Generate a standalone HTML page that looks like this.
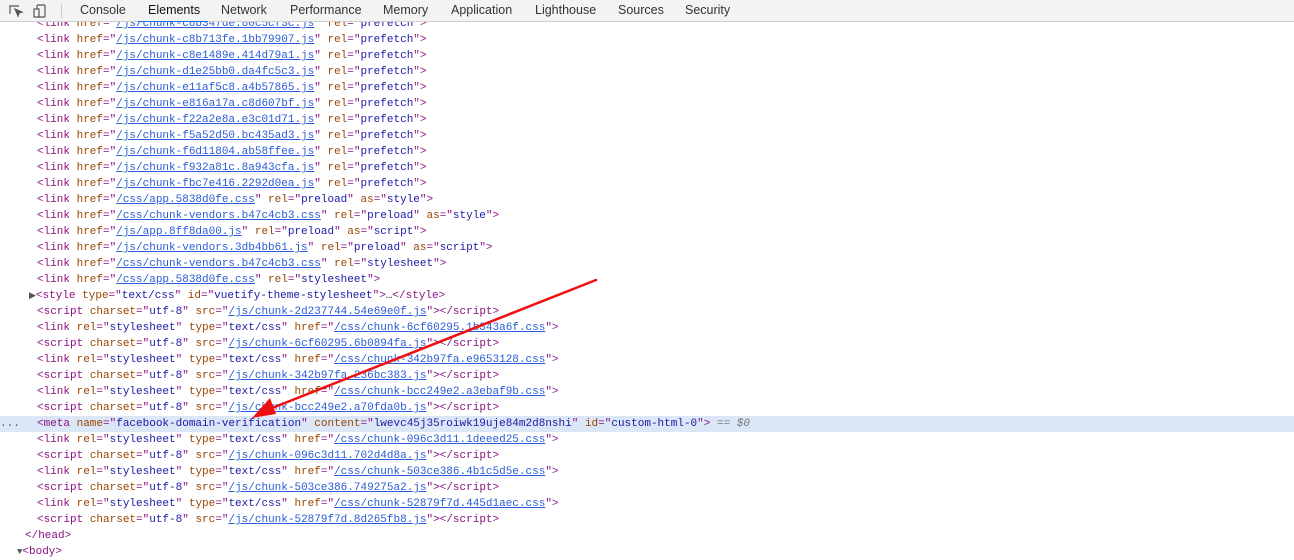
<!DOCTYPE html>
<html><head><meta charset="utf-8"><style>
body{margin:0;width:1294px;height:559px;overflow:hidden;background:#fff;position:relative;font-family:"Liberation Mono",monospace;font-size:11px}
.l{position:absolute;left:0;right:0;height:16px;line-height:16px;white-space:pre;color:#881280}
.t{color:#881280}.a{color:#994500}.v{color:#1a1aa6}.u{color:#1a1aa6;text-decoration:underline;color:#2a5bd7}
.hl{background:#dbe7f7}
#tb{position:absolute;left:0;top:0;width:1294px;height:21px;background:#f3f3f3;border-bottom:1px solid #cfcfcf;font-family:"Liberation Sans",sans-serif;font-size:12.5px;color:#333;z-index:2}
#tb span{position:absolute;top:3px}
</style></head><body>
<div id="tb">
<svg style="position:absolute;left:8px;top:3px" width="40" height="16" viewBox="0 0 40 16" fill="none" stroke="#555" stroke-width="1.2"><path d="M2 11V3h9"/><path d="M7 6l7 3-3 1-1 3z" fill="#555"/><rect x="29" y="2" width="8" height="12" rx="1"/><rect x="26" y="6" width="5" height="8" fill="#f3f3f3"/></svg>
<div style="position:absolute;left:61px;top:4px;width:1px;height:14px;background:#ccc"></div>
<span style="left:80px">Console</span><span style="left:148px;color:#111">Elements</span><span style="left:221px">Network</span><span style="left:290px">Performance</span><span style="left:383px">Memory</span><span style="left:451px">Application</span><span style="left:535px">Lighthouse</span><span style="left:618px">Sources</span><span style="left:685px">Security</span>
<div style="position:absolute;left:138px;top:21px;width:70px;height:1px;background:#1a73e8"></div>
</div>
<div class="l" style="top:16px;left:37px">&lt;link <span class="a">href</span>="<span class="u">/js/chunk-c8b347de.80c5cf3c.js</span>" <span class="a">rel</span>="<span class="v">prefetch</span>"&gt;</div>
<div class="l" style="top:32px;left:37px">&lt;link <span class="a">href</span>="<span class="u">/js/chunk-c8b713fe.1bb79907.js</span>" <span class="a">rel</span>="<span class="v">prefetch</span>"&gt;</div>
<div class="l" style="top:48px;left:37px">&lt;link <span class="a">href</span>="<span class="u">/js/chunk-c8e1489e.414d79a1.js</span>" <span class="a">rel</span>="<span class="v">prefetch</span>"&gt;</div>
<div class="l" style="top:64px;left:37px">&lt;link <span class="a">href</span>="<span class="u">/js/chunk-d1e25bb0.da4fc5c3.js</span>" <span class="a">rel</span>="<span class="v">prefetch</span>"&gt;</div>
<div class="l" style="top:80px;left:37px">&lt;link <span class="a">href</span>="<span class="u">/js/chunk-e11af5c8.a4b57865.js</span>" <span class="a">rel</span>="<span class="v">prefetch</span>"&gt;</div>
<div class="l" style="top:96px;left:37px">&lt;link <span class="a">href</span>="<span class="u">/js/chunk-e816a17a.c8d607bf.js</span>" <span class="a">rel</span>="<span class="v">prefetch</span>"&gt;</div>
<div class="l" style="top:112px;left:37px">&lt;link <span class="a">href</span>="<span class="u">/js/chunk-f22a2e8a.e3c01d71.js</span>" <span class="a">rel</span>="<span class="v">prefetch</span>"&gt;</div>
<div class="l" style="top:128px;left:37px">&lt;link <span class="a">href</span>="<span class="u">/js/chunk-f5a52d50.bc435ad3.js</span>" <span class="a">rel</span>="<span class="v">prefetch</span>"&gt;</div>
<div class="l" style="top:144px;left:37px">&lt;link <span class="a">href</span>="<span class="u">/js/chunk-f6d11804.ab58ffee.js</span>" <span class="a">rel</span>="<span class="v">prefetch</span>"&gt;</div>
<div class="l" style="top:160px;left:37px">&lt;link <span class="a">href</span>="<span class="u">/js/chunk-f932a81c.8a943cfa.js</span>" <span class="a">rel</span>="<span class="v">prefetch</span>"&gt;</div>
<div class="l" style="top:176px;left:37px">&lt;link <span class="a">href</span>="<span class="u">/js/chunk-fbc7e416.2292d0ea.js</span>" <span class="a">rel</span>="<span class="v">prefetch</span>"&gt;</div>
<div class="l" style="top:192px;left:37px">&lt;link <span class="a">href</span>="<span class="u">/css/app.5838d0fe.css</span>" <span class="a">rel</span>="<span class="v">preload</span>" <span class="a">as</span>="<span class="v">style</span>"&gt;</div>
<div class="l" style="top:208px;left:37px">&lt;link <span class="a">href</span>="<span class="u">/css/chunk-vendors.b47c4cb3.css</span>" <span class="a">rel</span>="<span class="v">preload</span>" <span class="a">as</span>="<span class="v">style</span>"&gt;</div>
<div class="l" style="top:224px;left:37px">&lt;link <span class="a">href</span>="<span class="u">/js/app.8ff8da00.js</span>" <span class="a">rel</span>="<span class="v">preload</span>" <span class="a">as</span>="<span class="v">script</span>"&gt;</div>
<div class="l" style="top:240px;left:37px">&lt;link <span class="a">href</span>="<span class="u">/js/chunk-vendors.3db4bb61.js</span>" <span class="a">rel</span>="<span class="v">preload</span>" <span class="a">as</span>="<span class="v">script</span>"&gt;</div>
<div class="l" style="top:256px;left:37px">&lt;link <span class="a">href</span>="<span class="u">/css/chunk-vendors.b47c4cb3.css</span>" <span class="a">rel</span>="<span class="v">stylesheet</span>"&gt;</div>
<div class="l" style="top:272px;left:37px">&lt;link <span class="a">href</span>="<span class="u">/css/app.5838d0fe.css</span>" <span class="a">rel</span>="<span class="v">stylesheet</span>"&gt;</div>
<div class="l" style="top:288px;left:29px"><span style="color:#555;font-size:9px">▶</span>&lt;style <span class="a">type</span>="<span class="v">text/css</span>" <span class="a">id</span>="<span class="v">vuetify-theme-stylesheet</span>"&gt;<span style="color:#333">…</span>&lt;/style&gt;</div>
<div class="l" style="top:304px;left:37px">&lt;script <span class="a">charset</span>="<span class="v">utf-8</span>" <span class="a">src</span>="<span class="u">/js/chunk-2d237744.54e69e0f.js</span>"&gt;&lt;/script&gt;</div>
<div class="l" style="top:320px;left:37px">&lt;link <span class="a">rel</span>="<span class="v">stylesheet</span>" <span class="a">type</span>="<span class="v">text/css</span>" <span class="a">href</span>="<span class="u">/css/chunk-6cf60295.1b343a6f.css</span>"&gt;</div>
<div class="l" style="top:336px;left:37px">&lt;script <span class="a">charset</span>="<span class="v">utf-8</span>" <span class="a">src</span>="<span class="u">/js/chunk-6cf60295.6b0894fa.js</span>"&gt;&lt;/script&gt;</div>
<div class="l" style="top:352px;left:37px">&lt;link <span class="a">rel</span>="<span class="v">stylesheet</span>" <span class="a">type</span>="<span class="v">text/css</span>" <span class="a">href</span>="<span class="u">/css/chunk-342b97fa.e9653128.css</span>"&gt;</div>
<div class="l" style="top:368px;left:37px">&lt;script <span class="a">charset</span>="<span class="v">utf-8</span>" <span class="a">src</span>="<span class="u">/js/chunk-342b97fa.236bc383.js</span>"&gt;&lt;/script&gt;</div>
<div class="l" style="top:384px;left:37px">&lt;link <span class="a">rel</span>="<span class="v">stylesheet</span>" <span class="a">type</span>="<span class="v">text/css</span>" <span class="a">href</span>="<span class="u">/css/chunk-bcc249e2.a3ebaf9b.css</span>"&gt;</div>
<div class="l" style="top:400px;left:37px">&lt;script <span class="a">charset</span>="<span class="v">utf-8</span>" <span class="a">src</span>="<span class="u">/js/chunk-bcc249e2.a70fda0b.js</span>"&gt;&lt;/script&gt;</div>
<div class="l hl" style="top:416px;padding-left:37px"><span style="position:absolute;left:0;color:#555">...</span>&lt;meta <span class="a">name</span>="<span class="v">facebook-domain-verification</span>" <span class="a">content</span>="<span class="v">lwevc45j35roiwk19uje84m2d8nshi</span>" <span class="a">id</span>="<span class="v">custom-html-0</span>"&gt; <span style="color:#777">== <i>$0</i></span></div>
<div class="l" style="top:432px;left:37px">&lt;link <span class="a">rel</span>="<span class="v">stylesheet</span>" <span class="a">type</span>="<span class="v">text/css</span>" <span class="a">href</span>="<span class="u">/css/chunk-096c3d11.1deeed25.css</span>"&gt;</div>
<div class="l" style="top:448px;left:37px">&lt;script <span class="a">charset</span>="<span class="v">utf-8</span>" <span class="a">src</span>="<span class="u">/js/chunk-096c3d11.702d4d8a.js</span>"&gt;&lt;/script&gt;</div>
<div class="l" style="top:464px;left:37px">&lt;link <span class="a">rel</span>="<span class="v">stylesheet</span>" <span class="a">type</span>="<span class="v">text/css</span>" <span class="a">href</span>="<span class="u">/css/chunk-503ce386.4b1c5d5e.css</span>"&gt;</div>
<div class="l" style="top:480px;left:37px">&lt;script <span class="a">charset</span>="<span class="v">utf-8</span>" <span class="a">src</span>="<span class="u">/js/chunk-503ce386.749275a2.js</span>"&gt;&lt;/script&gt;</div>
<div class="l" style="top:496px;left:37px">&lt;link <span class="a">rel</span>="<span class="v">stylesheet</span>" <span class="a">type</span>="<span class="v">text/css</span>" <span class="a">href</span>="<span class="u">/css/chunk-52879f7d.445d1aec.css</span>"&gt;</div>
<div class="l" style="top:512px;left:37px">&lt;script <span class="a">charset</span>="<span class="v">utf-8</span>" <span class="a">src</span>="<span class="u">/js/chunk-52879f7d.8d265fb8.js</span>"&gt;&lt;/script&gt;</div>
<div class="l" style="top:528px;left:25px">&lt;/head&gt;</div>
<div class="l" style="top:544px;left:17px"><span style="color:#555;font-size:9px">▼</span>&lt;body&gt;</div>
<svg style="position:absolute;left:0;top:0;z-index:3" width="1294" height="559"><path d="M596 280 L262 412" stroke="#f01010" stroke-width="2.5" stroke-linecap="round"/><path d="M252 418 L270 398 L276 414 Z" fill="#f01010"/></svg>
</body></html>
